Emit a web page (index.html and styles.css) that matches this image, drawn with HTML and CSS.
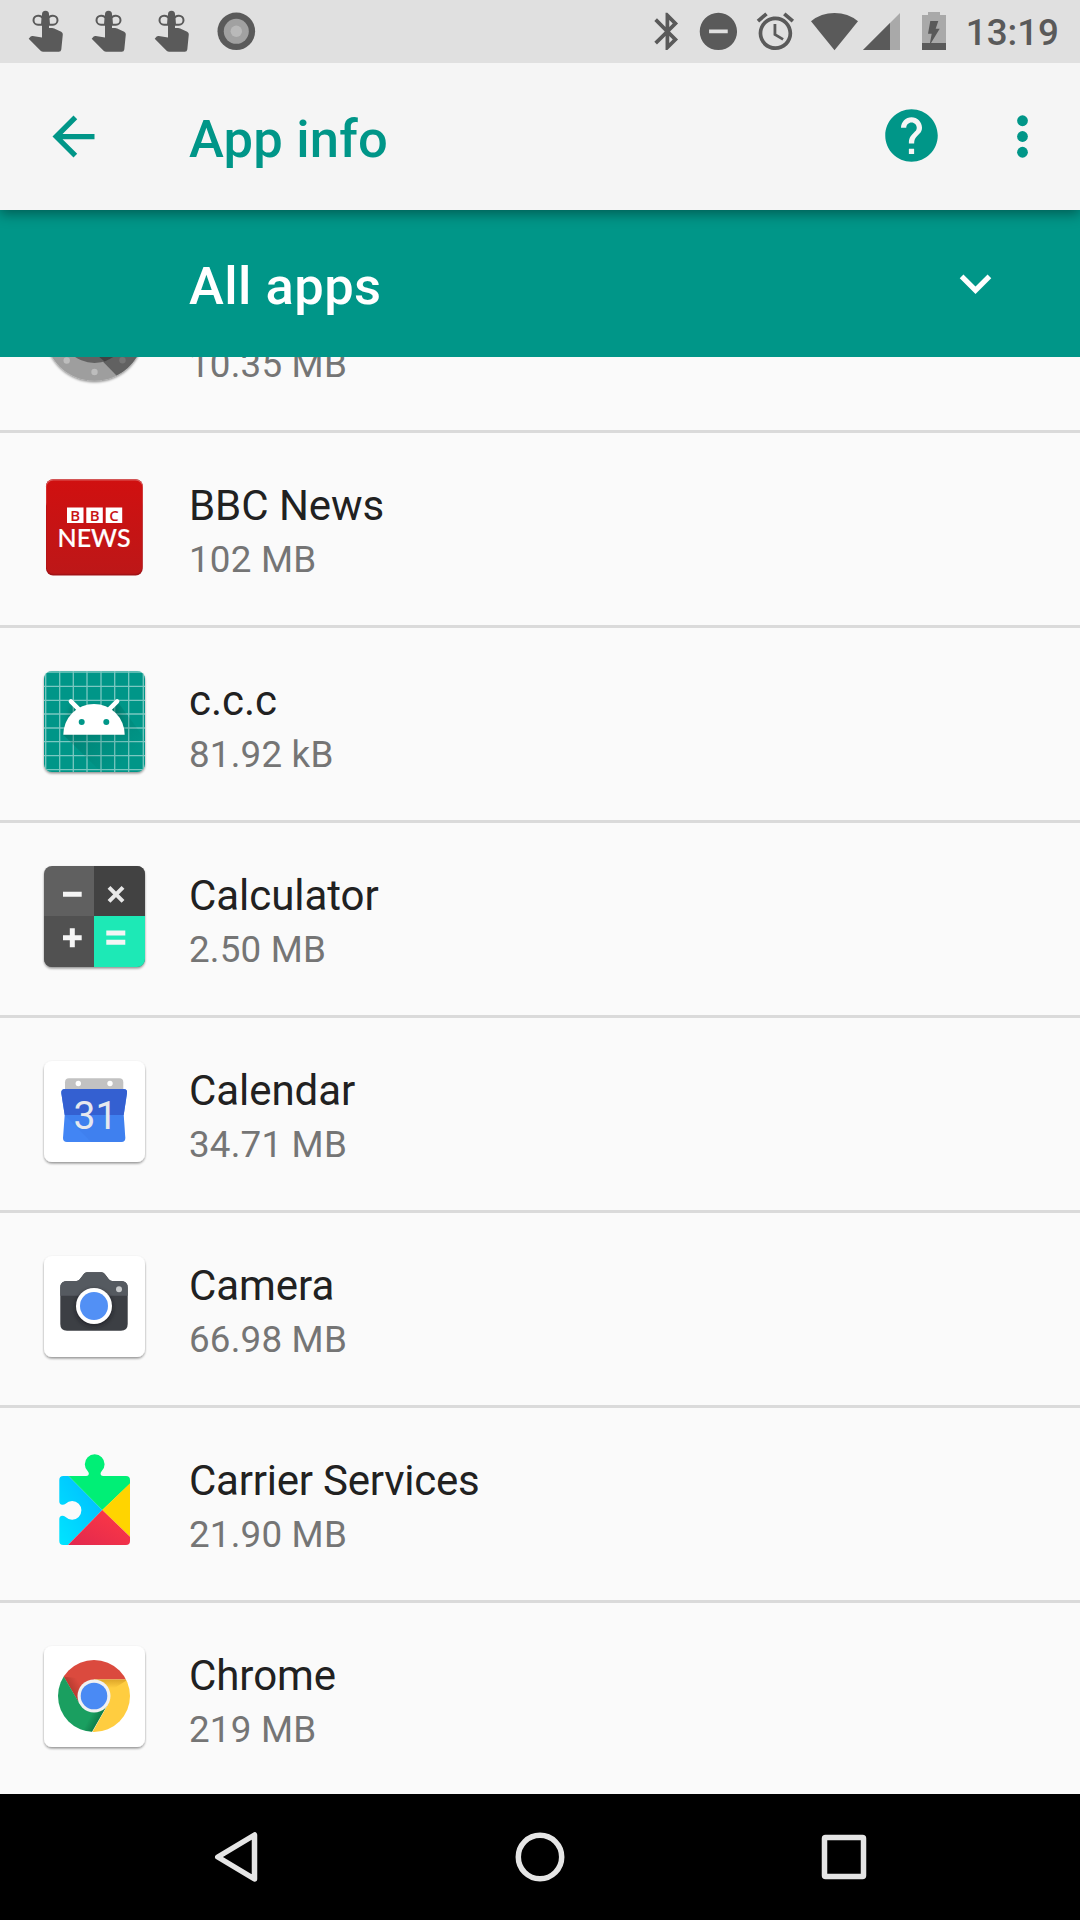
FILE: index.html
```html
<!DOCTYPE html>
<html lang="en">
<head>
<meta charset="utf-8">
<title>App info</title>
<link rel="stylesheet" href="styles.css">
</head>
<body>
<svg class="defs" aria-hidden="true">
  <defs>
    <g id="touch">
      <path d="M27 37.5V14.2a3.5 3.5 0 0 1 7 0V28h3.2q1 0 2 .4l7 3.3q1.8.9 1.6 2.8L46.300 49.600q-.3 2.200-2.500 2.200H28.200q-1.500 0-2.600-1L13.700 38.800l2-2.200q.8-.8 2-.6z"/>
      <path d="M27 24.700h-4a4.500 4.500 0 0 1 0-9h.500q3 0 4 2.500zM34 24.700h4a4.500 4.500 0 0 0 0-9h-.500q-3 0-4 2.500z" fill="none" stroke="#5a5a5a" stroke-width="2"/>
    </g>
    <linearGradient id="red" x1="0" y1="0" x2="0" y2="1"><stop offset="0" stop-color="#d01010"/><stop offset="1" stop-color="#bd1718"/></linearGradient>
    <linearGradient id="shade" x1="0" y1="0" x2="1" y2="1"><stop offset="0" stop-color="#004d40" stop-opacity=".4"/><stop offset=".8" stop-color="#004d40" stop-opacity="0"/></linearGradient>
    <linearGradient id="cyan" x1="1" y1="0" x2="0" y2="1"><stop offset="0" stop-color="#00b8ff"/><stop offset="1" stop-color="#00e5ff"/></linearGradient>
    <linearGradient id="rose" x1="1" y1="0" x2="0" y2="1"><stop offset="0" stop-color="#ff3a44"/><stop offset="1" stop-color="#e1284f"/></linearGradient>
    <linearGradient id="redshade" gradientUnits="userSpaceOnUse" x1="36" y1="51" x2="46" y2="45"><stop offset="0" stop-color="#8e2a20" stop-opacity=".5"/><stop offset="1" stop-color="#8e2a20" stop-opacity="0"/></linearGradient>
    <linearGradient id="yellowshade" gradientUnits="userSpaceOnUse" x1="0" y1="40" x2="0" y2="49"><stop offset="0" stop-color="#b0700a" stop-opacity=".45"/><stop offset="1" stop-color="#b0700a" stop-opacity="0"/></linearGradient>
    <linearGradient id="greenshade" gradientUnits="userSpaceOnUse" x1="66" y1="81" x2="57" y2="76"><stop offset="0" stop-color="#055a34" stop-opacity=".55"/><stop offset="1" stop-color="#055a34" stop-opacity="0"/></linearGradient>
    <clipPath id="disc"><circle cx="60" cy="57" r="36"/></clipPath>
    <clipPath id="tileclip"><rect x="10" y="7" width="101" height="101" rx="8"/></clipPath>
    <filter id="drop" x="-10%" y="-10%" width="120%" height="125%"><feDropShadow dx="0" dy="1.500" stdDeviation="1" flood-color="#000" flood-opacity=".42"/></filter>
    <filter id="soft" x="-30%" y="-30%" width="160%" height="160%"><feGaussianBlur stdDeviation="2"/></filter>
  </defs>
</svg>

<header class="status">
  <div class="notifications">
    <svg class="note" viewBox="0 0 63 63"><use href="#touch"/></svg>
    <svg class="note" viewBox="0 0 63 63"><use href="#touch"/></svg>
    <svg class="note" viewBox="0 0 63 63"><use href="#touch"/></svg>
    <svg class="note" viewBox="0 0 63 63"><circle cx="32.300" cy="31.300" r="18.800"/><circle cx="32.300" cy="31.300" r="12.500" fill="#a1a1a1"/><circle cx="32.300" cy="31.300" r="5.700" fill="#b9b9b9"/></svg>
  </div>
  <div class="system">
    <svg class="sys" viewBox="0 0 24 24"><path d="M17.710 7.710L12 2h-1v7.590L6.410 5 5 6.410 10.590 12 5 17.590 6.410 19 11 14.410V22h1l5.710-5.710-4.300-4.290 4.300-4.290zM13 5.830l1.880 1.880L13 9.590V5.830zm1.880 10.460L13 18.170v-3.760l1.880 1.880z"/></svg>
    <svg class="sys dnd" viewBox="0 0 24 24"><path d="M12 2C6.480 2 2 6.480 2 12s4.480 10 10 10 10-4.480 10-10S17.520 2 12 2zm5 11H7v-2h10v2z"/></svg>
    <svg class="sys alarm" viewBox="0 0 24 24"><path d="M22 5.720l-4.600-3.860-1.290 1.530 4.600 3.860L22 5.720zM7.880 3.390L6.600 1.860 2 5.710l1.290 1.530 4.590-3.850zM12.500 8H11v6l4.750 2.850.75-1.230-4-2.370V8zM12 4c-4.970 0-9 4.030-9 9s4.020 9 9 9c4.970 0 9-4.030 9-9s-4.030-9-9-9zm0 16c-3.870 0-7-3.130-7-7s3.130-7 7-7 7 3.130 7 7-3.130 7-7 7z"/></svg>
    <svg class="wifi" viewBox="0 0 47 63"><path d="M23.500 50.300L0 21.200Q10 13 23.500 13T47 21.200z"/></svg>
    <svg class="signal" viewBox="0 0 37 63"><path d="M37 13v37H0z" fill="#a9a9a9"/><path d="M27 23v27H0z"/></svg>
    <svg class="battery" viewBox="0 0 24 63"><path d="M6 12h12v3h6v35H0V15h6z" fill="#a9a9a9"/><path d="M0 43h24v7H0zM8.300 21h8l-2.600 7.700h4L7.500 45.500l2.200-11.800H6z"/></svg>
    <span class="clock">13:19</span>
  </div>
</header>

<div class="toolbar">
  <svg class="action" viewBox="0 0 24 24"><path d="M20 11H7.830l5.590-5.590L12 4l-8 8 8 8 1.410-1.410L7.830 13H20v-2z"/></svg>
  <h1 class="title">App info</h1>
  <svg class="action help" viewBox="0 0 24 24"><path d="M12 2C6.480 2 2 6.480 2 12s4.480 10 10 10 10-4.480 10-10S17.520 2 12 2zm1 17h-2v-2h2v2zm2.070-7.750l-.9.920C13.450 12.900 13 13.500 13 15h-2v-.5c0-1.100.45-2.100 1.170-2.830l1.240-1.260c.37-.36.590-.86.590-1.410 0-1.100-.9-2-2-2s-2 .9-2 2H8c0-2.210 1.790-4 4-4s4 1.790 4 4c0 .88-.36 1.680-.93 2.250z"/></svg>
  <svg class="action more" viewBox="0 0 24 24"><circle cx="12" cy="6" r="2.050"/><circle cx="12" cy="12" r="2.050"/><circle cx="12" cy="18" r="2.050"/></svg>
</div>

<div class="filter">
  <span class="filter-label">All apps</span>
  <svg class="chevron" viewBox="0 0 24 24"><path d="M16.590 8.590L12 13.170 7.410 8.590 6 10l6 6 6-6z"/></svg>
</div>

<main class="list">
  <div class="row cut">
    <svg class="icon" viewBox="0 0 120 120">
      <g filter="url(#drop)"><circle cx="60.500" cy="57" r="49.700" fill="#9e9e9e"/></g>
      <path d="M60.500 57L110 57A49.700 49.700 0 0 1 82.500 101.500L60.500 79z" fill="#616161"/>
      <circle cx="60.500" cy="54.500" r="34.500" fill="#616161"/>
      <path d="M60.500 79L70.500 87.500Q84 82 90 72L60.500 54z" fill="#424242"/>
      <g fill="#bdbdbd"><circle cx="32.700" cy="86.500" r="3.200"/><circle cx="60.500" cy="98" r="3.200"/></g><circle cx="88.500" cy="86.300" r="3.200" fill="#757575"/>
    </svg>
    <div class="text"><div class="size">10.35 MB</div></div>
  </div>

  <div class="row">
    <svg class="icon" viewBox="0 0 120 120">
      <rect x="12" y="10.300" width="96.700" height="96.300" rx="7" fill="#a31216"/>
      <rect x="12" y="10.300" width="96.700" height="30" rx="7" fill="#dc5a5a"/>
      <rect x="12.400" y="11.500" width="96" height="93.300" rx="7" fill="url(#red)"/>
      <path d="M33 38.500h16.500V54H33zM52.300 38.500h16.500V54H52.300zM71.700 38.500h16.500V54H71.700z" fill="#fff"/>
      <g class="bbc"><text x="41.300" y="51.700">B</text><text x="60.600" y="51.700">B</text><text x="80" y="51.700">C</text></g>
      <text class="news" x="23.500" y="78" textLength="73" lengthAdjust="spacingAndGlyphs">NEWS</text>
    </svg>
    <div class="text"><div class="name">BBC News</div><div class="size">102 MB</div></div>
  </div>

  <div class="row">
    <svg class="icon" viewBox="0 0 120 120">
      <rect x="10" y="7" width="101" height="101" rx="8" fill="#009688" filter="url(#drop)"/>
      <g clip-path="url(#tileclip)">
        <path d="M11.700 7v101M25.700 7v101M39.300 7v101M53 7v101M67 7v101M80.700 7v101M94.700 7v101M109.300 7v101M10 8h101M10 22.300h101M10 36.300h101M10 50h101M10 64h101M10 77.700h101M10 91.700h101M10 105.700h101" stroke="#fff" stroke-opacity=".48" stroke-width="1.300"/>
        <path d="M29.300 70.700L67 108h44V75L83 37l-12 20z" fill="url(#shade)"/>
        <path d="M29.300 70.700L36 42h48l8 28z" fill="#004d40" opacity=".25" filter="url(#soft)"/>
      </g>
      <path d="M29.300 70.700a30.700 30.700 0 0 1 61.400 0z" fill="#fff"/>
      <path d="M36.900 37.300l9 9M83.100 37.300l-9 9" stroke="#fff" stroke-width="4.500" stroke-linecap="round"/>
      <circle cx="47.700" cy="58" r="3" fill="#009688"/><circle cx="72.300" cy="58" r="3" fill="#009688"/>
    </svg>
    <div class="text"><div class="name">c.c.c</div><div class="size">81.92 kB</div></div>
  </div>

  <div class="row">
    <svg class="icon" viewBox="0 0 120 120">
      <rect x="10" y="7" width="101" height="101" rx="8" fill="#616161" filter="url(#drop)"/>
      <g clip-path="url(#tileclip)"><path d="M60 7h51v50H60z" fill="#424242"/><path d="M10 57h50v51H10z" fill="#515151"/><path d="M60 57h51v51H60z" fill="#1de9b6"/></g>
      <path d="M29 35.300h18.700M29 78.700h18.700M38.300 69.300v19M72.300 74h19M72.300 83.300h19" stroke="#f5f5f5" stroke-width="5"/>
      <path d="M75 28.300l14 14M89 28.300l-14 14" stroke="#e8e8e8" stroke-width="4"/>
    </svg>
    <div class="text"><div class="name">Calculator</div><div class="size">2.50 MB</div></div>
  </div>

  <div class="row">
    <svg class="icon" viewBox="0 0 120 120">
      <rect x="10" y="7" width="101" height="101" rx="8" fill="#fff" filter="url(#drop)"/>
      <path d="M31 36v-7.700q0-4 4-4h50.300q4 0 4 4V36z" fill="#c2c2c2"/>
      <circle cx="44.300" cy="29.500" r="2.700" fill="#fff"/><circle cx="76" cy="29.500" r="2.700" fill="#fff"/>
      <path d="M31 35h58.500q4 0 3.500 4L89.700 61l1.600 23q0 4-4 4H33q-4 0-4-4l1.700-23-3.400-22q-.3-4 3.700-4z" fill="#4285f4"/>
      <path d="M31 35h58.500q4 0 3.500 4L89.700 61h-59l-3.400-22q-.3-4 3.700-4z" fill="#3460d1"/>
      <path d="M30.700 61L57 88h30.300q4 0 4-4L89.700 61z" fill="#3367d6" opacity=".18"/>
      <text class="day" x="61.500" y="75">31</text>
    </svg>
    <div class="text"><div class="name">Calendar</div><div class="size">34.71 MB</div></div>
  </div>

  <div class="row">
    <svg class="icon" viewBox="0 0 120 120">
      <rect x="10" y="7" width="101" height="101" rx="8" fill="#fff" filter="url(#drop)"/>
      <path d="M33 32h9.500q2 0 3.300-1.700l4-5.300q1.200-1.700 3.200-1.700h14.500q2 0 3.300 1.700l4 5.300q1.300 1.700 3.300 1.700H87q6.700 0 6.700 6.700V75q0 6.700-6.700 6.700H33q-6.700 0-6.700-6.700V38.700Q26.300 32 33 32z" fill="#3c3f44"/>
      <path d="M33 32h9.500q2 0 3.300-1.700l4-5.300q1.200-1.700 3.200-1.700h14.500q2 0 3.300 1.700l4 5.300q1.300 1.700 3.300 1.700H87q6.700 0 6.700 6.700v8H26.300v-8Q26.300 32 33 32z" fill="#555a60"/>
      <circle cx="60" cy="59" r="18.500" fill="#17191c" opacity=".6" filter="url(#soft)"/>
      <circle cx="60" cy="57" r="18" fill="#fff"/><circle cx="60" cy="57" r="14" fill="#5290f5"/>
      <circle cx="85" cy="40.300" r="3" fill="#c9cbcd"/>
    </svg>
    <div class="text"><div class="name">Camera</div><div class="size">66.98 MB</div></div>
  </div>

  <div class="row">
    <svg class="icon" viewBox="0 0 120 120">
      <path d="M34.600 32L68.300 66 34 101h-4.700q-4 0-4-4V75q0-3 3-3.200 1.700 0 3.300 1.200A9.300 9.300 0 1 0 31.600 59.700Q30 61 28.300 60.800q-3-.3-3-3.300V36q0-4 4-4z" fill="url(#cyan)"/>
      <path d="M34.600 32h17.500q3-.3 2.700-2.700-.2-1-1-2a9.900 9.900 0 1 1 13.800 0q-.8 1-1 2-.3 2.400 2.700 2.700H92q4 0 4 4v3.700L68.300 66z" fill="#00ef76"/>
      <path d="M96 39.300v53.400L68.300 66z" fill="#ffd400"/>
      <path d="M68.300 66L96 92.700V97q0 4-4 4H34z" fill="url(#rose)"/>
    </svg>
    <div class="text"><div class="name long">Carrier Services</div><div class="size">21.90 MB</div></div>
  </div>

  <div class="row last">
    <svg class="icon" viewBox="0 0 120 120">
      <rect x="10" y="7" width="101" height="101" rx="8" fill="#fff" filter="url(#drop)"/>
      <g clip-path="url(#disc)">
        <path d="M20 20h80v20.500H60L44.500 63 20 21z" fill="#db4a3e"/>
        <path d="M29.500 37.700L44.500 63 60 40.500z" fill="url(#redshade)"/>
        <path d="M20 21L45.500 64.500 60 73l14-8.200L55.500 97H10z" fill="#1a9f60"/>
        <path d="M74 64.800L58 93 46 90 60 70z" fill="url(#greenshade)"/>
        <path d="M60 40.500h42V97H56.200L74 65.300z" fill="#ffcd40"/>
        <path d="M60 40.500h34L76 52z" fill="url(#yellowshade)"/>
      </g>
      <circle cx="60" cy="57" r="16.500" fill="#f1f1f1"/><circle cx="60" cy="57" r="13.300" fill="#4a8af4"/>
    </svg>
    <div class="text"><div class="name">Chrome</div><div class="size">219 MB</div></div>
  </div>
</main>

<nav class="navbar">
  <svg class="key" viewBox="0 0 60 60"><path d="M48.500 8v44L11.800 30z"/></svg>
  <svg class="key" viewBox="0 0 60 60"><circle cx="30" cy="30" r="21.700"/></svg>
  <svg class="key" viewBox="0 0 60 60"><rect x="10.500" y="10.500" width="39" height="39" rx="1"/></svg>
</nav>
</body>
</html>
```
FILE: styles.css
```css
* { box-sizing: border-box; }

body {
  margin: 0;
  width: 1080px;
  height: 1920px;
  overflow: hidden;
  display: flex;
  flex-direction: column;
  background: #fafafa;
  font-family: Roboto, "Noto Sans", sans-serif;
}

svg { display: block; flex: none; }
.defs { position: absolute; width: 0; height: 0; }

.status {
  flex: none;
  height: 63px;
  padding-left: 15px;
  display: flex;
  background: #e0e0e0;
  color: #5a5a5a;
  fill: #5a5a5a;
}
.notifications { display: flex; width: 252px; }
.note { width: 63px; height: 63px; }
.system { display: flex; align-items: center; margin-left: 378px; }
.sys { width: 44.8px; height: 44.8px; }
.dnd { margin-left: 6.500px; }
.alarm { margin-left: 12.200px; }
.wifi { width: 47px; height: 63px; margin-left: 13.400px; }
.signal { width: 37px; height: 63px; margin-left: 4.300px; }
.battery { width: 24px; height: 63px; margin-left: 22px; }
.clock { margin-left: 20px; font-size: 36.750px; font-weight: 500; line-height: 63px; padding-top: 2px; }

.toolbar {
  flex: none;
  height: 147px;
  padding: 0 26px 0 42px;
  display: flex;
  align-items: center;
  background: #f5f5f5;
  color: #009688;
  fill: #009688;
  box-shadow: 0 4px 12px rgba(0, 0, 0, .38);
  clip-path: inset(0 0 -20px 0);
  z-index: 2;
}
.action { width: 63px; height: 63px; }
.title { flex: 1; margin: 0 0 0 84px; font-size: 52.500px; font-weight: 500; line-height: 62px; padding-top: 4px; letter-spacing: .2px; }
.help { margin: -2px 48px 0 0; }

.filter {
  flex: none;
  height: 147px;
  padding: 0 73px 0 189px;
  display: flex;
  align-items: center;
  justify-content: space-between;
  background: #009688;
  color: #fff;
  fill: #fff;
  z-index: 1;
}
.filter-label { font-size: 52.500px; font-weight: 500; line-height: 62px; padding-top: 4px; letter-spacing: .45px; }
.chevron { width: 63px; height: 63px; }

.list {
  flex: 1;
  min-height: 0;
  overflow: hidden;
  display: flex;
  flex-direction: column;
}
.row {
  flex: none;
  height: 195px;
  padding-left: 34px;
  display: flex;
  gap: 35px;
  border-bottom: 3px solid #dadada;
}
.cut { margin-top: -119px; }
.cut .text { padding-top: 102px; }
.last { border-bottom: 0; }
.icon { width: 120px; height: 120px; margin-top: 36px; }
.text { padding-top: 45px; }
.name { font-size: 42px; line-height: 56px; height: 57px; color: #212121; letter-spacing: -.05px; }
.long { letter-spacing: -.22px; }
.size { font-size: 36.750px; line-height: 50px; color: #757575; letter-spacing: .2px; }

.bbc { font: 600 15px "Open Sans", sans-serif; fill: #c81414; text-anchor: middle; }
.news { font: 500 24.500px Lato, sans-serif; fill: #fff; stroke: #fff; stroke-width: .2px; }
.day { font: 400 39px Roboto, sans-serif; fill: #e6e8ee; text-anchor: middle; }

.navbar {
  flex: none;
  height: 126px;
  padding: 0 206px;
  display: flex;
  align-items: center;
  justify-content: space-between;
  background: #000;
}
.key { width: 60px; height: 60px; fill: none; stroke: #e5e5e5; stroke-width: 5.500; stroke-linejoin: round; }
```
